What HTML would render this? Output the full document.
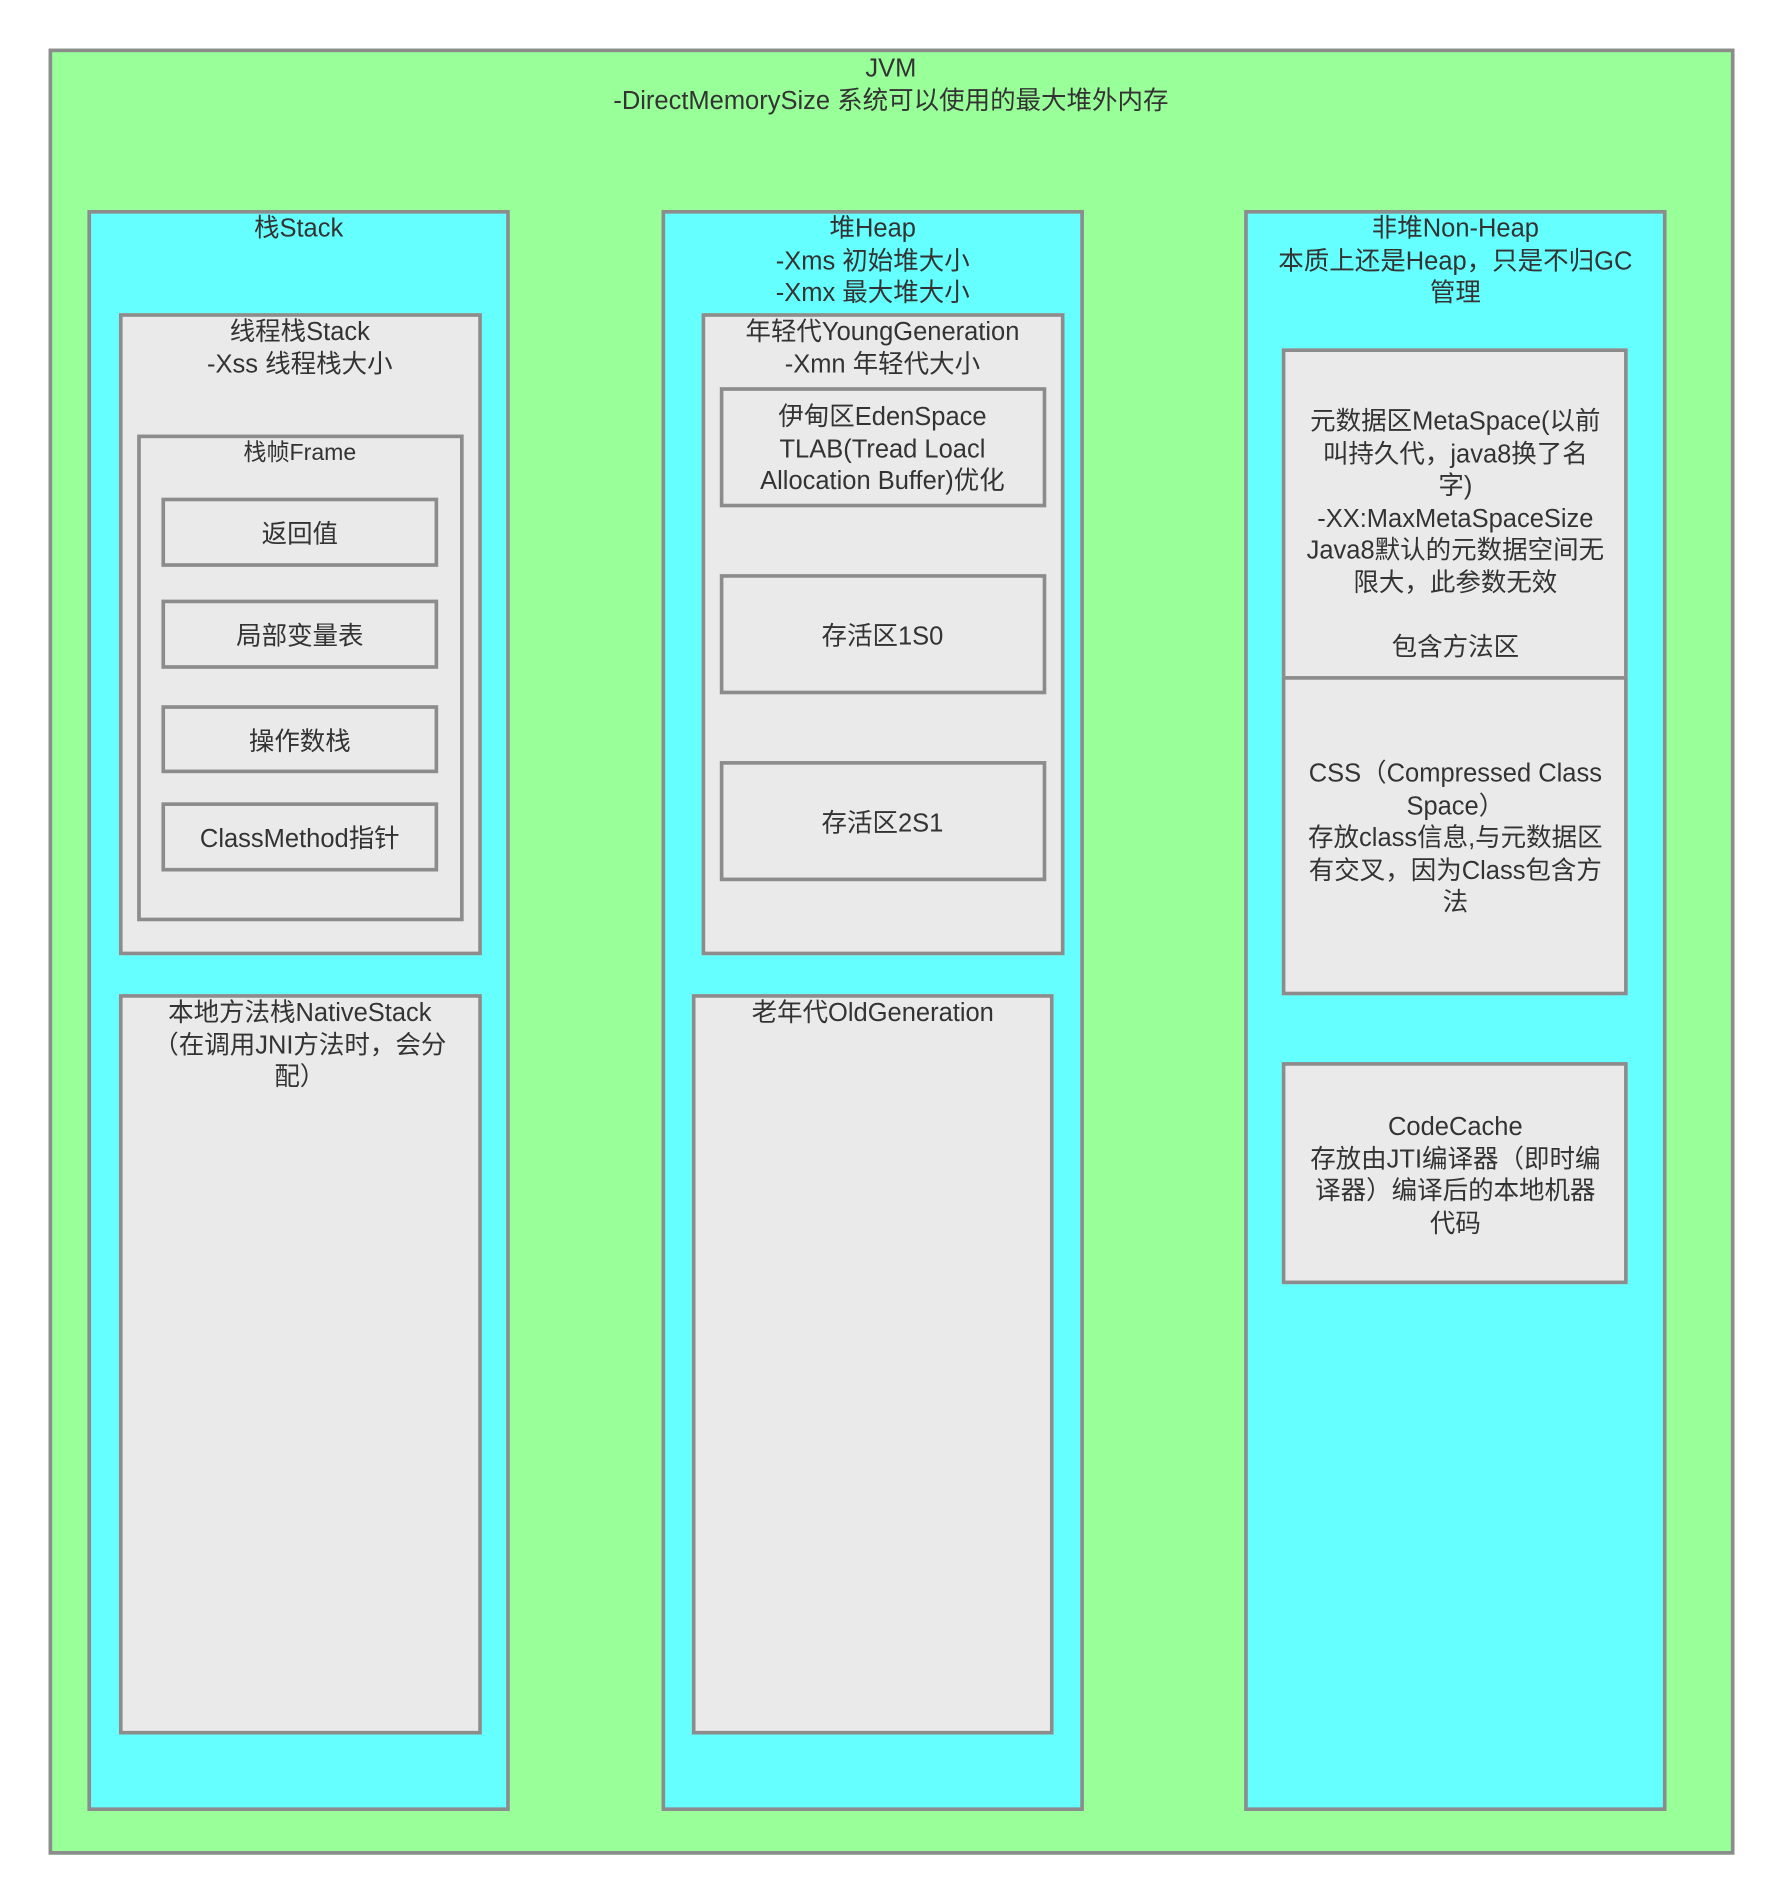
<!DOCTYPE html>
<html><head><meta charset="utf-8">
<style>
html,body{margin:0;padding:0;background:#fff;width:1782px;height:1902px;overflow:hidden;}
#s{position:absolute;left:0;top:0;width:1466px;height:1565px;transform:scale(1.2138);transform-origin:0 0;}
.b{position:absolute;box-sizing:border-box;border:3px solid #8c8c8c;}
.g{background:#99ff99;}
.c{background:#66ffff;}
.e{background:#eaeaea;}
.t{position:absolute;text-align:center;white-space:nowrap;color:#333;font-family:"Liberation Sans","Noto Sans CJK SC",sans-serif;font-size:21px;line-height:26.5px;transform:translateX(-50%);}
</style></head><body><div id="s">
<div class="b g" style="left:40px;top:40px;width:1389px;height:1488px"></div>
<div class="t" style="left:734px;top:44px">JVM<br>-DirectMemorySize 系统可以使用的最大堆外内存</div>

<div class="b c" style="left:72px;top:173px;width:348px;height:1319px"></div>
<div class="t" style="left:246px;top:176px">栈Stack</div>
<div class="b e" style="left:98px;top:258px;width:299px;height:529px"></div>
<div class="t" style="left:247px;top:261px">线程栈Stack<br>-Xss 线程栈大小</div>
<div class="b e" style="left:113px;top:358px;width:269px;height:401px"></div>
<div class="t" style="left:247px;top:361px;font-size:19px">栈帧Frame</div>
<div class="b e" style="left:133px;top:410px;width:228px;height:57px"></div>
<div class="t" style="left:247px;top:428px">返回值</div>
<div class="b e" style="left:133px;top:494px;width:228px;height:57px"></div>
<div class="t" style="left:247px;top:512px">局部变量表</div>
<div class="b e" style="left:133px;top:581px;width:228px;height:56px"></div>
<div class="t" style="left:247px;top:599px">操作数栈</div>
<div class="b e" style="left:133px;top:661px;width:228px;height:57px"></div>
<div class="t" style="left:247px;top:679px">ClassMethod指针</div>
<div class="b e" style="left:98px;top:819px;width:299px;height:610px"></div>
<div class="t" style="left:247px;top:822px">本地方法栈NativeStack<br>（在调用JNI方法时，会分<br>配）</div>

<div class="b c" style="left:545px;top:173px;width:348px;height:1319px"></div>
<div class="t" style="left:719px;top:176px">堆Heap<br>-Xms 初始堆大小<br>-Xmx 最大堆大小</div>
<div class="b e" style="left:578px;top:258px;width:299px;height:529px"></div>
<div class="t" style="left:727px;top:261px">年轻代YoungGeneration<br>-Xmn 年轻代大小</div>
<div class="b e" style="left:593px;top:319px;width:269px;height:99px"></div>
<div class="t" style="left:727px;top:331px">伊甸区EdenSpace<br>TLAB(Tread Loacl<br>Allocation Buffer)优化</div>
<div class="b e" style="left:593px;top:473px;width:269px;height:99px"></div>
<div class="t" style="left:727px;top:512px">存活区1S0</div>
<div class="b e" style="left:593px;top:627px;width:269px;height:99px"></div>
<div class="t" style="left:727px;top:666px">存活区2S1</div>
<div class="b e" style="left:570px;top:819px;width:298px;height:610px"></div>
<div class="t" style="left:719px;top:822px">老年代OldGeneration</div>

<div class="b c" style="left:1025px;top:173px;width:348px;height:1319px"></div>
<div class="t" style="left:1199px;top:176px">非堆Non-Heap<br>本质上还是Heap，只是不归GC<br>管理</div>
<div class="b e" style="left:1056px;top:287px;width:285px;height:273px"></div>
<div class="t" style="left:1199px;top:335px">元数据区MetaSpace(以前<br>叫持久代，java8换了名<br>字)<br>-XX:MaxMetaSpaceSize<br>Java8默认的元数据空间无<br>限大，此参数无效<br><br>包含方法区</div>
<div class="b e" style="left:1056px;top:557px;width:285px;height:263px"></div>
<div class="t" style="left:1199px;top:625px">CSS（Compressed Class<br>Space）<br>存放class信息,与元数据区<br>有交叉，因为Class包含方<br>法</div>
<div class="b e" style="left:1056px;top:875px;width:285px;height:183px"></div>
<div class="t" style="left:1199px;top:916px">CodeCache<br>存放由JTI编译器（即时编<br>译器）编译后的本地机器<br>代码</div>
</div></body></html>
